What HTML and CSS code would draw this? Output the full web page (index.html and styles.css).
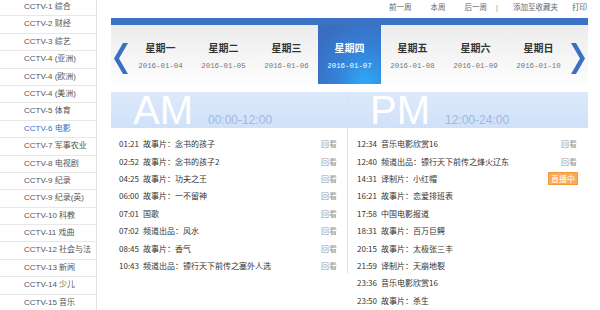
FILE: index.html
```html
<!DOCTYPE html>
<html lang="zh-CN">
<head>
  <meta charset="UTF-8">
  <title>CCTV-6 电影 节目单</title>
  <link rel="stylesheet" href="styles.css">
</head>
<body>
  <div class="page">
    <!-- 频道列表 -->
    <ul class="channels">
      <li>CCTV-1 综合</li>
      <li>CCTV-2 财经</li>
      <li>CCTV-3 综艺</li>
      <li>CCTV-4 (亚洲)</li>
      <li>CCTV-4 (欧洲)</li>
      <li>CCTV-4 (美洲)</li>
      <li>CCTV-5 体育</li>
      <li class="active">CCTV-6 电影</li>
      <li>CCTV-7 军事农业</li>
      <li>CCTV-8 电视剧</li>
      <li>CCTV-9 纪录</li>
      <li>CCTV-9 纪录(英)</li>
      <li>CCTV-10 科教</li>
      <li>CCTV-11 戏曲</li>
      <li>CCTV-12 社会与法</li>
      <li>CCTV-13 新闻</li>
      <li>CCTV-14 少儿</li>
      <li>CCTV-15 音乐</li>
    </ul>

    <div class="main">
      <div class="toolbar">
        <a>前一周</a>
        <a class="gap-l">本周</a>
        <a class="gap-l">后一周</a>
        <span class="sep">|</span>
        <a class="gap-m">添加至收藏夹</a>
        <a class="gap-s">打印</a>
      </div>

      <!-- 一周 -->
      <div class="week">
        <div class="week-bar"></div>
        <div class="week-strip">
          <span class="arrow prev">
            <svg width="14" height="31" viewBox="0 0 14 31"><polygon points="9,0 14,0 5,15.5 14,31 9,31 0,15.5" fill="#3a70c3"/></svg>
          </span>
          <div class="day"><b>星期一</b><span>2016-01-04</span></div>
          <div class="day"><b>星期二</b><span>2016-01-05</span></div>
          <div class="day"><b>星期三</b><span>2016-01-06</span></div>
          <div class="day current"><b>星期四</b><span>2016-01-07</span></div>
          <div class="day"><b>星期五</b><span>2016-01-08</span></div>
          <div class="day"><b>星期六</b><span>2016-01-09</span></div>
          <div class="day"><b>星期日</b><span>2016-01-10</span></div>
          <span class="arrow next">
            <svg width="14" height="31" viewBox="0 0 14 31"><polygon points="0,0 5,0 14,15.5 5,31 0,31 9,15.5" fill="#3a70c3"/></svg>
          </span>
        </div>
      </div>

      <!-- 节目单 -->
      <div class="schedule">
        <div class="half am">
          <div class="half-head"><span class="big">AM</span><span class="range">00:00-12:00</span></div>
          <ul class="shows">
            <li><span class="time">01:21</span><span class="title">故事片：念书的孩子</span><a class="replay">回看</a></li>
            <li><span class="time">02:52</span><span class="title">故事片：念书的孩子2</span><a class="replay">回看</a></li>
            <li><span class="time">04:25</span><span class="title">故事片：功夫之王</span><a class="replay">回看</a></li>
            <li><span class="time">06:00</span><span class="title">故事片：一不留神</span><a class="replay">回看</a></li>
            <li><span class="time">07:01</span><span class="title">国歌</span><a class="replay">回看</a></li>
            <li><span class="time">07:02</span><span class="title">频道出品：风水</span><a class="replay">回看</a></li>
            <li><span class="time">08:45</span><span class="title">故事片：香气</span><a class="replay">回看</a></li>
            <li><span class="time">10:43</span><span class="title">频道出品：镖行天下前传之塞外人选</span><a class="replay">回看</a></li>
          </ul>
        </div>
        <div class="half pm">
          <div class="half-head"><span class="big">PM</span><span class="range">12:00-24:00</span></div>
          <ul class="shows">
            <li><span class="time">12:34</span><span class="title">音乐电影欣赏16</span><a class="replay">回看</a></li>
            <li><span class="time">12:40</span><span class="title">频道出品：镖行天下前传之烽火辽东</span><a class="replay">回看</a></li>
            <li><span class="time">14:31</span><span class="title">译制片：小红帽</span><a class="live">直播中</a></li>
            <li><span class="time">16:21</span><span class="title">故事片：恋爱排班表</span></li>
            <li><span class="time">17:58</span><span class="title">中国电影报道</span></li>
            <li><span class="time">18:31</span><span class="title">故事片：百万巨鳄</span></li>
            <li><span class="time">20:15</span><span class="title">故事片：太极张三丰</span></li>
            <li><span class="time">21:59</span><span class="title">译制片：天崩地裂</span></li>
            <li><span class="time">23:36</span><span class="title">音乐电影欣赏16</span></li>
            <li><span class="time">23:50</span><span class="title">故事片：杀生</span></li>
          </ul>
        </div>
      </div>
    </div>
  </div>
</body>
</html>
```

FILE: styles.css
```css
body {
  margin: 0;
  padding: 0;
  background-color: #fff;
  color: #333;
  font-family: "Liberation Sans", "Noto Sans CJK SC", sans-serif;
  overflow: hidden;
}
ul {
  list-style: none;
  margin: 0;
  padding: 0;
}
a {
  cursor: pointer;
}
.page {
  display: flex;
  align-items: flex-start;
  width: 600px;
  height: 310px;
}

/* 频道列表 */
.channels {
  width: 96px;
  margin-top: -1px;
  border-right: 1px solid #e2e2e2;
  flex-shrink: 0;
}
.channels li {
  height: 16.4px;
  line-height: 16.4px;
  padding-left: 24px;
  border-bottom: 1px solid #e8e8e8;
  font-size: 8px;
  color: #555;
  white-space: nowrap;
}
.channels li.active {
  color: #2f6fc6;
}

.main {
  width: 477px;
  margin-left: 14px;
}

/* 顶部链接 */
.toolbar {
  display: flex;
  justify-content: flex-end;
  height: 18px;
  line-height: 15px;
  font-size: 7.5px;
  color: #666;
  padding-right: 1px;
}
.toolbar .gap-l {
  margin-left: 19px;
}
.toolbar .sep {
  margin-left: 9px;
  color: #999;
}
.toolbar .gap-m {
  margin-left: 15px;
}
.toolbar .gap-s {
  margin-left: 14px;
}

/* 一周 */
.week-bar {
  height: 7px;
  background-color: #3b72c4;
}
.week-strip {
  display: flex;
  height: 59px;
  background: linear-gradient(#ececec, #fdfdfd);
}
.arrow {
  display: flex;
  width: 17px;
  padding-top: 18px;
}
.arrow.prev {
  justify-content: flex-end;
  padding-right: 1px;
}
.arrow.next {
  padding-left: 1px;
}
.day {
  width: 63px;
  display: flex;
  flex-direction: column;
  align-items: center;
  padding-top: 18px;
  box-sizing: border-box;
}
.day b {
  font-size: 10px;
  line-height: 12px;
  color: #333;
}
.day span {
  margin-top: 6px;
  font-family: "Liberation Mono", monospace;
  font-size: 7.4px;
  line-height: 10px;
  color: #777;
}
.day.current {
  background: radial-gradient(ellipse at 75% 100%, #2eaaf5 0%, #3580d6 45%, #3a6cc0 85%);
}
.day.current b,
.day.current span {
  color: #fff;
}

/* 节目单 */
.schedule {
  display: flex;
  align-items: flex-start;
  margin-top: 8px;
}
.half.am {
  width: 236px;
  border-right: 1px solid #e2e2e2;
}
.half.pm {
  width: 240px;
}
.half-head {
  display: flex;
  align-items: baseline;
  height: 36px;
  padding-left: 22px;
  background: linear-gradient(#dde9fb, #cfe1f8);
}
.big {
  font-family: "Liberation Sans", sans-serif;
  font-size: 40px;
  line-height: 36px;
  color: #fff;
}
.range {
  margin-left: 15px;
  font-family: "Liberation Sans", sans-serif;
  font-size: 12px;
  color: #9db9e2;
}
.shows {
  padding: 7px 10px 0 8px;
}
.pm .shows {
  padding: 7px 11px 0 9px;
}
.shows li {
  display: flex;
  align-items: center;
  height: 17.4px;
  font-family: "Noto Sans CJK SC", sans-serif;
  font-size: 8px;
  color: #333;
  white-space: nowrap;
}
.shows .time {
  margin-right: 4px;
}
.shows .replay {
  margin-left: auto;
  color: #999;
}
.shows .live {
  margin-left: auto;
  margin-right: -1px;
  padding: 0 2px;
  line-height: 11px;
  border: 1px solid #f3983a;
  background-color: #f9aa56;
  color: #fff;
}
```
